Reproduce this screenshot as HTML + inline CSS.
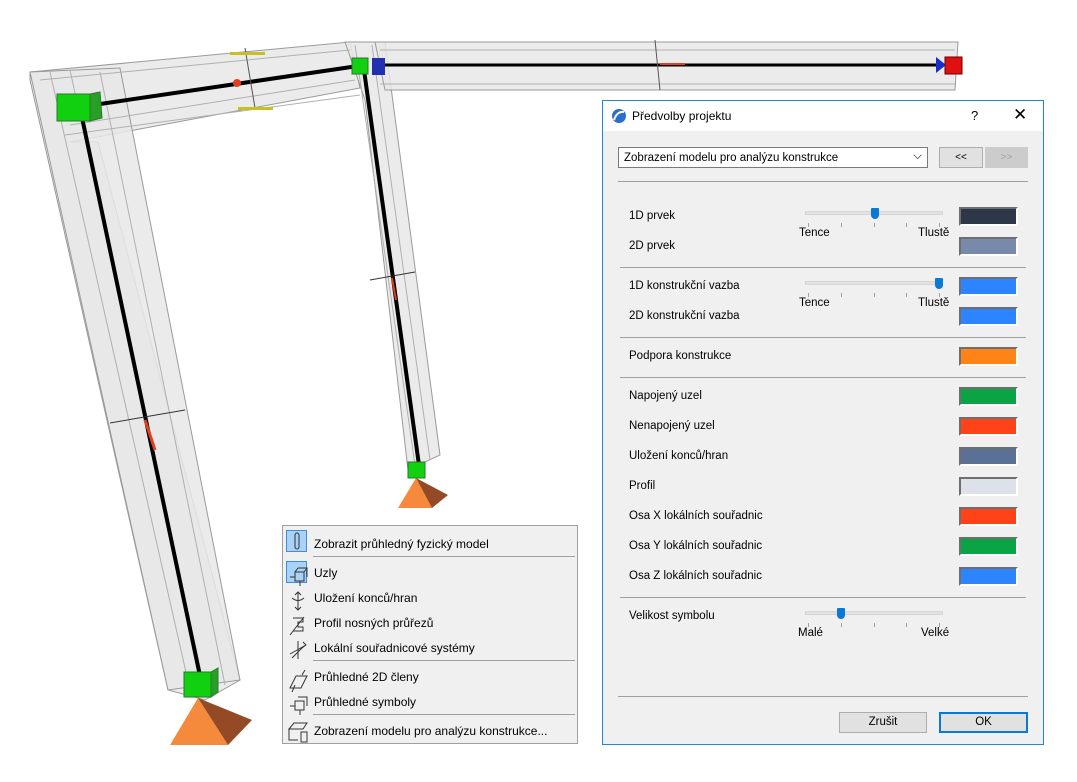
<!DOCTYPE html>
<html><head><meta charset="utf-8"><style>
*{margin:0;padding:0;box-sizing:border-box}
body{width:1077px;height:782px;background:#fff;position:relative;overflow:hidden;font-family:"Liberation Sans",sans-serif;font-size:11.5px;color:#000}
.a{position:absolute;white-space:nowrap}
.dlg{position:absolute;left:602px;top:100px;width:442px;height:645px;background:#f0f0f0;border:1px solid #1e88d6}
.tb{position:absolute;left:0;top:0;width:440px;height:30px;background:#fff}
.sep{position:absolute;height:1px;background:#a0a0a0}
.sw{position:absolute;left:356px;width:59px;height:19px;border:2px solid #6e6e6e;border-right-color:#fff;border-bottom-color:#fff}
.trk{position:absolute;left:202px;width:138px;height:4px;background:#e2e2e2;border:1px solid #d6d6d6}
.tk{position:absolute;width:1px;height:4px;background:#a0a0a0}
.th{position:absolute;width:8px;height:11px;background:#0a78d7;border-radius:1px 1px 4px 4px}
.btn{position:absolute;height:21px;background:#e1e1e1;border:1px solid #adadad;text-align:center;line-height:19px}
.menu{position:absolute;left:282px;top:525px;width:296px;height:219px;background:#f0f0f0;border:1px solid #a0a0a0}
.mi{position:absolute;left:31px}
.ms{position:absolute;left:30px;width:262px;height:1px;background:#a0a0a0}
.ib{position:absolute;left:3px;width:21px;height:22px;background:#a9d2f7;border:1px solid #3d8ee0}
</style></head><body>
<svg class="a" style="left:0;top:0" width="1077" height="782">
<g fill="#e8e8e8" fill-opacity=".85" stroke="#9a9a9a" stroke-width="1">
<polygon points="30,72 350,42 360,88 70,142 98,142 240,680 205,700 168,690 30,80"/>
<polygon points="30,72 120,68 240,680 168,690"/>
<polygon points="345,42 385,42 440,455 408,470 365,100"/>
<polygon points="375,42 958,42 955,90 385,90"/>
</g>
<g stroke="#b0b0b0" fill="none">
<line x1="50" y1="72" x2="190" y2="690"/><line x1="70" y1="70" x2="205" y2="690"/><line x1="100" y1="72" x2="225" y2="685"/>
<line x1="40" y1="80" x2="350" y2="50"/><line x1="65" y1="135" x2="360" y2="95"/><line x1="70" y1="125" x2="355" y2="80"/>
<line x1="355" y1="45" x2="415" y2="465"/><line x1="372" y1="45" x2="430" y2="460"/>
<line x1="380" y1="50" x2="955" y2="50"/><line x1="380" y1="84" x2="955" y2="84"/>
</g>
<g stroke="#000" stroke-width="4">
<line x1="80" y1="108" x2="200" y2="676"/><line x1="100" y1="104" x2="358" y2="66"/>
<line x1="364" y1="70" x2="419" y2="465"/></g>
<line x1="380" y1="65" x2="938" y2="65" stroke="#000" stroke-width="3"/>
<polygon points="936,57 946,65 936,73" fill="#1a2ed0"/>
<rect x="945" y="57" width="17" height="17" fill="#e01010" stroke="#600" stroke-width="1"/>
<polygon points="372,58 385,58 385,75 372,75" fill="#2030b0"/>
<line x1="660" y1="64" x2="685" y2="64" stroke="#e04020" stroke-width="2"/>
<line x1="655" y1="40" x2="660" y2="90" stroke="#555"/>
<line x1="245" y1="48" x2="255" y2="108" stroke="#555"/>
<rect x="230" y="52" width="35" height="3" fill="#c8c020"/><rect x="238" y="107" width="35" height="3" fill="#c8c020"/>
<circle cx="237" cy="83" r="4" fill="#e04020"/>
<line x1="110" y1="423" x2="185" y2="410" stroke="#333"/>
<line x1="145" y1="420" x2="155" y2="450" stroke="#e04020" stroke-width="3"/>
<line x1="370" y1="280" x2="415" y2="272" stroke="#333"/>
<line x1="392" y1="278" x2="396" y2="300" stroke="#e04020" stroke-width="2"/>
<g stroke="#2a7a2a"><rect x="57" y="94" width="33" height="27" fill="#10d010"/><polygon points="90,94 100,92 102,118 90,121" fill="#28a028"/>
<rect x="352" y="58" width="16" height="16" fill="#10d010"/>
<rect x="408" y="462" width="17" height="16" fill="#10d010"/>
<rect x="184" y="672" width="27" height="25" fill="#10d010"/><polygon points="211,672 218,668 218,692 211,697" fill="#28a028"/></g>
<polygon points="198,698 170,745 228,745" fill="#f58a3c"/><polygon points="198,698 228,745 252,720" fill="#944a24"/>
<polygon points="416,478 398,508 432,508" fill="#f58a3c"/><polygon points="416,478 432,508 448,495" fill="#944a24"/>
</svg>

<div class="dlg">
<div class="tb">
<svg class="a" style="left:8px;top:7px" width="16" height="16"><circle cx="8" cy="8" r="7" fill="#2a6fc9"/><path d="M3,12 Q6,3 13,4" stroke="#fff" stroke-width="2" fill="none"/></svg>
<div class="a" style="left:29px;top:8px;font-size:12px">Předvolby projektu</div>
<div class="a" style="left:368px;top:7px;font-size:13px">?</div>
<div class="a" style="left:410px;top:4px;font-size:17px">✕</div>
</div>
<div class="a" style="left:15px;top:46px;width:310px;height:21px;background:#fff;border:1px solid #7a7a7a;padding:4px 5px">Zobrazení modelu pro analýzu konstrukce<span style="position:absolute;right:5px;top:2px">⌵</span></div>
<div class="btn" style="left:336px;top:46px;width:44px;font-size:10px">&lt;&lt;</div>
<div class="btn" style="left:382px;top:46px;width:43px;color:#a0a0a0;background:#ccc;border-color:#ccc;font-size:10px">&gt;&gt;</div>
<div class="sep" style="left:15px;top:80px;width:410px"></div>
<div class="a" style="left:26px;top:109px">1D prvek</div><div class="a" style="left:26px;top:139px">2D prvek</div>
<div class="trk" style="top:110px"></div><div class="th" style="left:268px;top:107px"></div>
<div class="tk" style="left:205px;top:122px"></div><div class="tk" style="left:238px;top:122px"></div><div class="tk" style="left:271px;top:122px"></div><div class="tk" style="left:303px;top:122px"></div><div class="tk" style="left:336px;top:122px"></div>
<div class="a" style="left:196px;top:126px">Tence</div><div class="a" style="left:315px;top:126px">Tlustě</div>
<div class="sw" style="top:106px;background:#2d3748"></div><div class="sw" style="top:136px;background:#7889aa"></div>
<div class="sep" style="left:17px;top:166px;width:406px"></div>
<div class="a" style="left:26px;top:179px">1D konstrukční vazba</div><div class="a" style="left:26px;top:209px">2D konstrukční vazba</div>
<div class="trk" style="top:180px"></div><div class="th" style="left:332px;top:177px"></div>
<div class="tk" style="left:205px;top:192px"></div><div class="tk" style="left:238px;top:192px"></div><div class="tk" style="left:271px;top:192px"></div><div class="tk" style="left:303px;top:192px"></div><div class="tk" style="left:336px;top:192px"></div>
<div class="a" style="left:196px;top:196px">Tence</div><div class="a" style="left:315px;top:196px">Tlustě</div>
<div class="sw" style="top:176px;background:#2c84ff"></div><div class="sw" style="top:206px;background:#2c84ff"></div>
<div class="sep" style="left:17px;top:236px;width:406px"></div>
<div class="a" style="left:26px;top:249px">Podpora konstrukce</div><div class="sw" style="top:246px;background:#ff8418"></div>
<div class="sep" style="left:17px;top:276px;width:406px"></div>
<div class="a" style="left:26px;top:289px">Napojený uzel</div><div class="sw" style="top:286px;background:#0aa444"></div>
<div class="a" style="left:26px;top:319px">Nenapojený uzel</div><div class="sw" style="top:316px;background:#ff4218"></div>
<div class="a" style="left:26px;top:349px">Uložení konců/hran</div><div class="sw" style="top:346px;background:#5a7094"></div>
<div class="a" style="left:26px;top:379px">Profil</div><div class="sw" style="top:376px;background:#dde1ea"></div>
<div class="a" style="left:26px;top:409px">Osa X lokálních souřadnic</div><div class="sw" style="top:406px;background:#ff4218"></div>
<div class="a" style="left:26px;top:439px">Osa Y lokálních souřadnic</div><div class="sw" style="top:436px;background:#0aa444"></div>
<div class="a" style="left:26px;top:469px">Osa Z lokálních souřadnic</div><div class="sw" style="top:466px;background:#2c84ff"></div>
<div class="sep" style="left:17px;top:496px;width:406px"></div>
<div class="a" style="left:26px;top:509px">Velikost symbolu</div>
<div class="trk" style="top:510px"></div><div class="th" style="left:234px;top:507px"></div>
<div class="tk" style="left:205px;top:522px"></div><div class="tk" style="left:238px;top:522px"></div><div class="tk" style="left:271px;top:522px"></div><div class="tk" style="left:303px;top:522px"></div><div class="tk" style="left:336px;top:522px"></div>
<div class="a" style="left:195px;top:526px">Malé</div><div class="a" style="left:318px;top:526px">Velké</div>
<div class="sep" style="left:15px;top:595px;width:410px"></div>
<div class="btn" style="left:236px;top:611px;width:88px">Zrušit</div>
<div class="btn" style="left:336px;top:611px;width:89px;border:2px solid #0a78d7;line-height:17px">OK</div>
</div>

<div class="menu">
<div class="ib" style="top:4px"></div><div class="ib" style="top:35px"></div>
<svg class="a" style="left:3px;top:4px" width="24" height="215" fill="none" stroke="#333" stroke-width="1">
<rect x="9" y="3" width="4" height="16" rx="2"/>
<path d="M4,47 H9 M9,42 H18 V51 H9 Z M12,38 H21 V47 M9,42 L12,38 M18,42 L21,38 M14,51 V56"/>
<path d="M12,62 V80 M9,65 L12,62 L15,65 M9,77 L12,80 L15,77 M6,68 Q12,73 18,68"/>
<path d="M7,88 H17 V92 H12 V97 H17 V101 H7 M4,105 L18,87"/>
<path d="M12,111 V129 M4,124 L20,115 M17,112 L20,115 L16,118 M6,128 L18,116"/>
<path d="M4,158 L10,146 H21 L15,158 Z M6,162 L9,155 M16,145 L19,140"/>
<path d="M4,176 H9 M9,171 H18 V180 H9 Z M12,167 H21 V176 M14,180 V185"/>
<path d="M3,199 L8,193 H21 L17,199 Z M3,199 V210 H12 M15,202 H21 V212 H15 Z"/>
</svg>
<div class="mi" style="top:11px;font-size:12px">Zobrazit průhledný fyzický model</div>
<div class="ms" style="top:30px"></div>
<div class="mi" style="top:40px;font-size:12px">Uzly</div>
<div class="mi" style="top:65px;font-size:12px">Uložení konců/hran</div>
<div class="mi" style="top:90px;font-size:12px">Profil nosných průřezů</div>
<div class="mi" style="top:115px;font-size:12px">Lokální souřadnicové systémy</div>
<div class="ms" style="top:134px"></div>
<div class="mi" style="top:144px;font-size:12px">Průhledné 2D členy</div>
<div class="mi" style="top:169px;font-size:12px">Průhledné symboly</div>
<div class="ms" style="top:188px"></div>
<div class="mi" style="top:198px;font-size:12px">Zobrazení modelu pro analýzu konstrukce...</div>
</div>
</body></html>
